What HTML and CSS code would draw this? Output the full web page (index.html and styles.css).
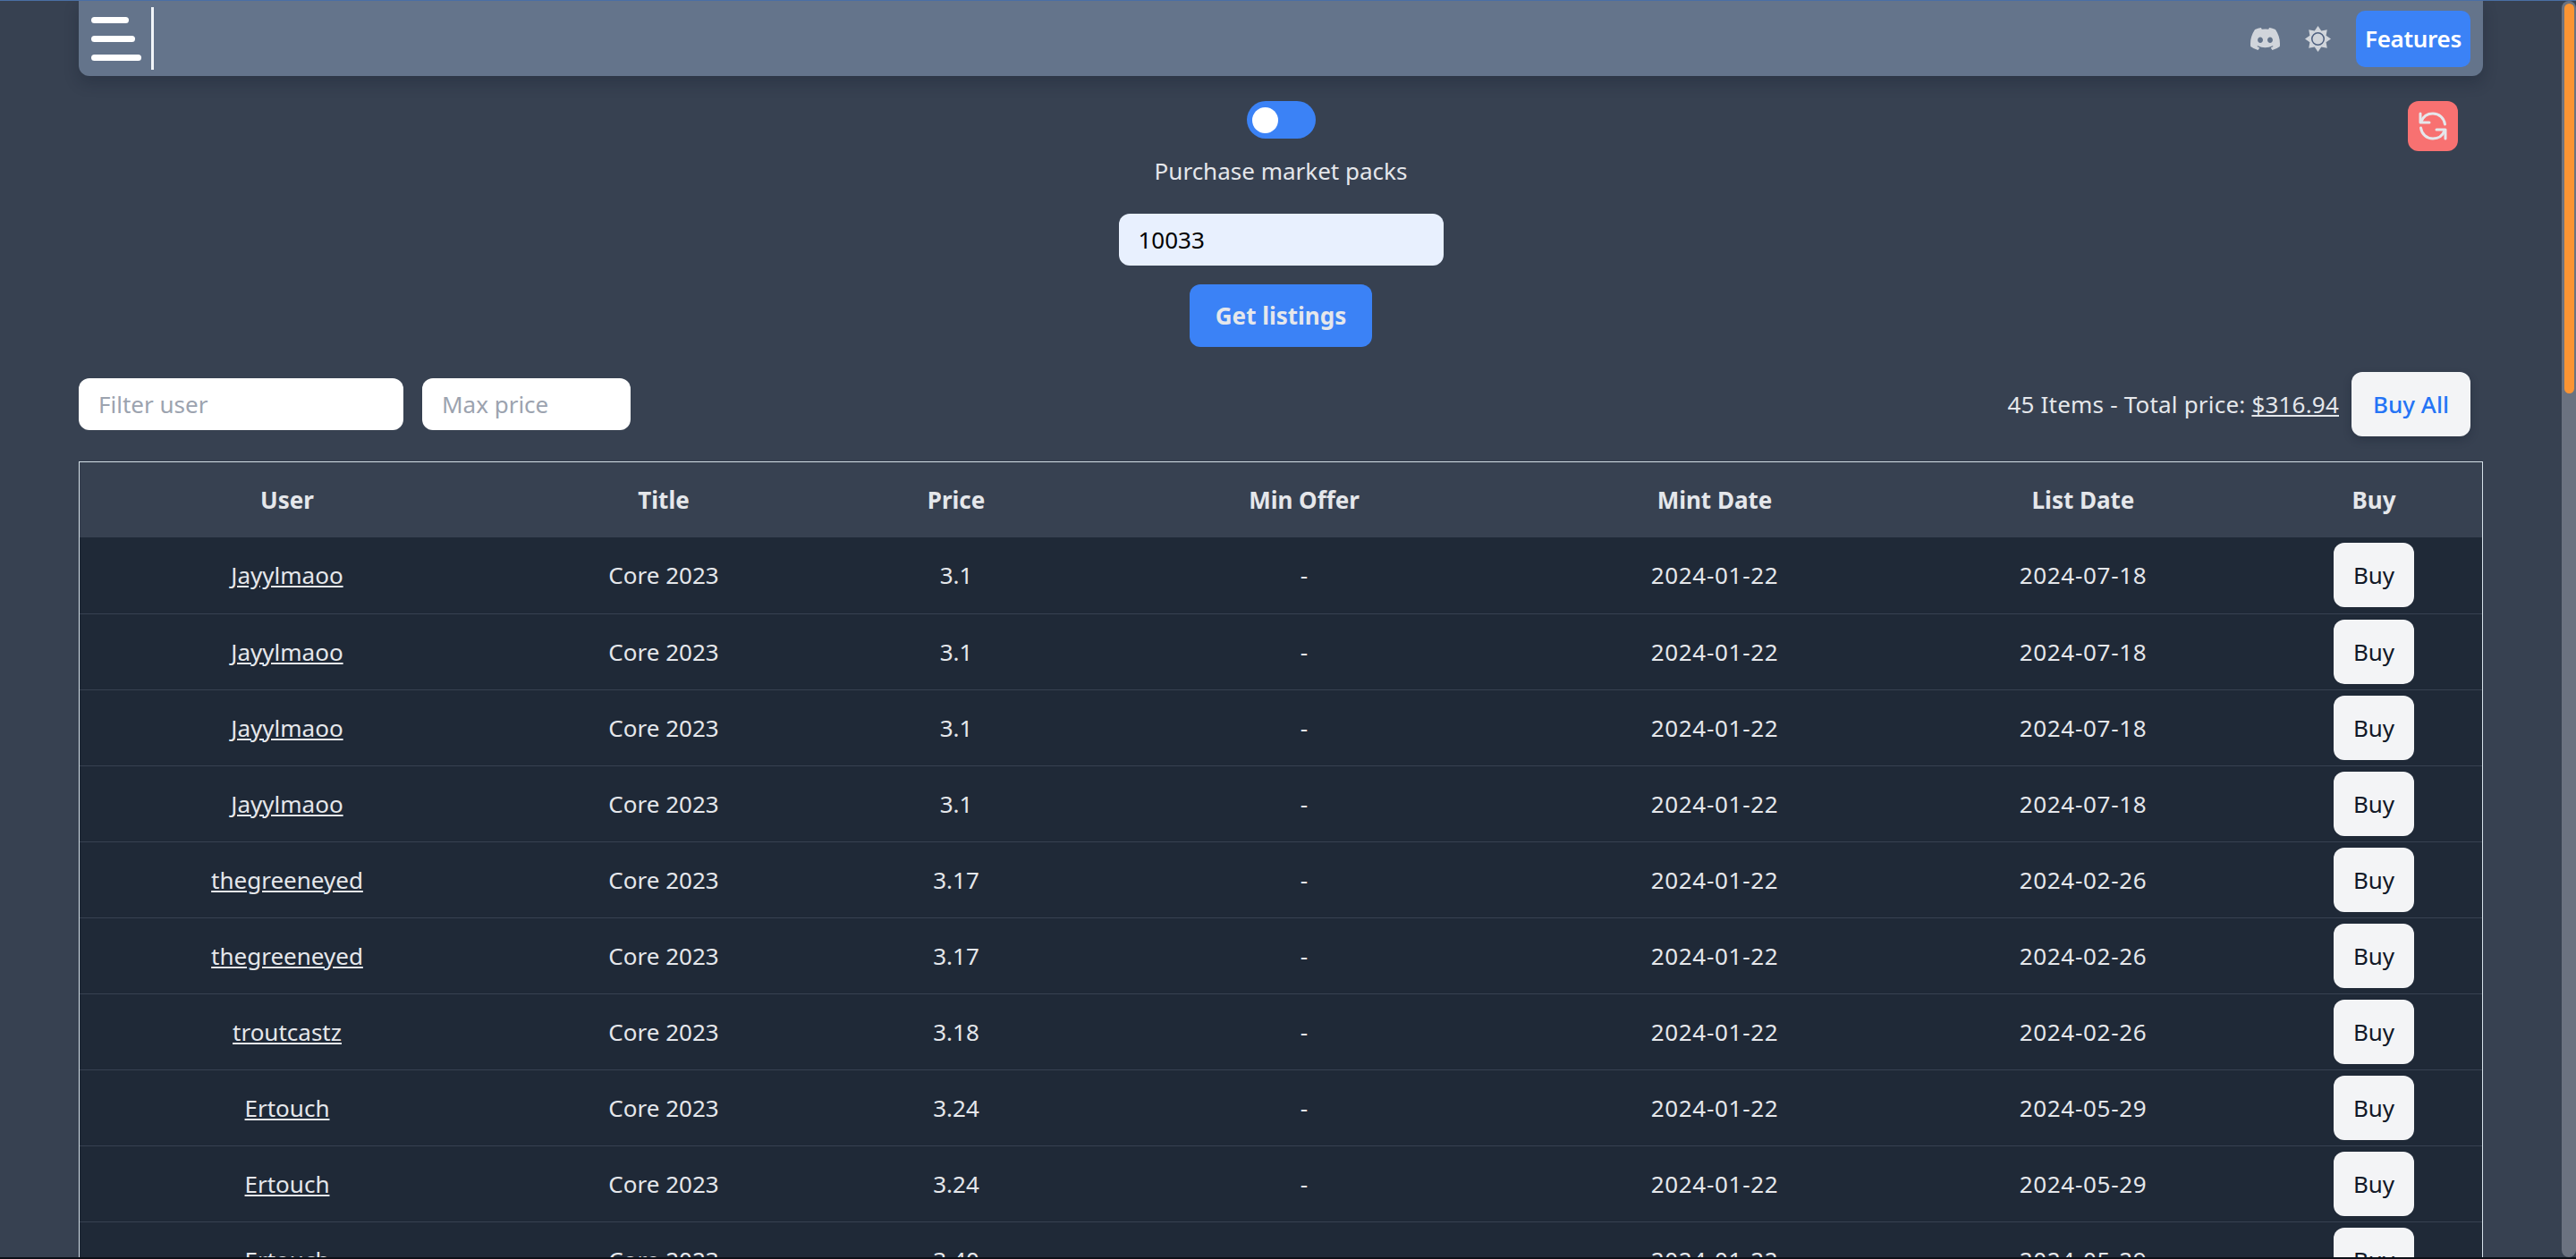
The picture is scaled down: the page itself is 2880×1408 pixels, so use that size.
FILE: index.html
```html
<!DOCTYPE html>
<html lang="en">
<head>
    <meta charset="UTF-8">
    <title>Market listings</title>
    <link rel="stylesheet" href="styles.css">
</head>
<body>

<div class="page">
    <nav class="navbar">
        <div class="nav-left">
            <button class="burger" aria-label="Menu">
                <span class="burger-line short"></span>
                <span class="burger-line mid"></span>
                <span class="burger-line long"></span>
            </button>
            <span class="nav-divider"></span>
        </div>
        <div class="nav-right">
            <svg class="icon-discord" viewBox="0 0 16 16" fill="currentColor"><path d="M13.545 2.907a13.227 13.227 0 0 0-3.257-1.011.05.05 0 0 0-.052.025c-.141.25-.297.577-.406.833a12.19 12.19 0 0 0-3.658 0 8.258 8.258 0 0 0-.412-.833.051.051 0 0 0-.052-.025c-1.125.194-2.22.534-3.257 1.011a.041.041 0 0 0-.021.018C.356 6.024-.213 9.047.066 12.032c.001.014.01.028.021.037a13.276 13.276 0 0 0 3.995 2.02.05.05 0 0 0 .056-.019c.308-.42.582-.863.818-1.329a.05.05 0 0 0-.01-.059.051.051 0 0 0-.018-.011 8.875 8.875 0 0 1-1.248-.595.05.05 0 0 1-.02-.066.051.051 0 0 1 .015-.019c.084-.063.168-.129.248-.195a.05.05 0 0 1 .051-.007c2.619 1.196 5.454 1.196 8.041 0a.052.052 0 0 1 .053.007c.08.066.164.132.248.195a.051.051 0 0 1-.004.085 8.254 8.254 0 0 1-1.249.594.05.05 0 0 0-.03.03.052.052 0 0 0 .003.041c.24.465.515.909.817 1.329a.05.05 0 0 0 .056.019 13.235 13.235 0 0 0 4.001-2.02.049.049 0 0 0 .021-.037c.334-3.451-.559-6.449-2.366-9.106a.034.034 0 0 0-.02-.019Zm-8.198 7.307c-.789 0-1.438-.724-1.438-1.612 0-.889.637-1.613 1.438-1.613.807 0 1.45.73 1.438 1.613 0 .888-.637 1.612-1.438 1.612Zm5.316 0c-.788 0-1.438-.724-1.438-1.612 0-.889.637-1.613 1.438-1.613.807 0 1.451.73 1.438 1.613 0 .888-.631 1.612-1.438 1.612Z"/></svg>
            <svg class="icon-sun" viewBox="0 0 28 28">
                <polygon class="sun-rays" points="14,0 17.64,5.22 23.9,4.1 22.78,10.36 28,14 22.78,17.64 23.9,23.9 17.64,22.78 14,28 10.36,22.78 4.1,23.9 5.22,17.64 0,14 5.22,10.36 4.1,4.1 10.36,5.22"/>
                <circle class="sun-ring" cx="14" cy="14" r="6.500"/>
            </svg>
            <button class="btn-features">Features</button>
        </div>
    </nav>

    <section class="pack-form">
        <div class="pack-center">
            <label class="switch"><span class="switch-knob"></span></label>
            <p class="switch-label">Purchase market packs</p>
            <input class="pack-input" type="text" value="10033">
            <button class="btn-primary">Get listings</button>
        </div>
        <button class="btn-refresh" aria-label="Refresh">
            <svg viewBox="0 0 32 32" fill="none" stroke="currentColor" stroke-width="3" stroke-linecap="round" stroke-linejoin="round">
                <path d="M2 2v10h10"/>
                <path d="M3 11C5 5.500 10 2 16 2c7 0 12.500 5 13.500 12"/>
                <path d="M30 30V20H20"/>
                <path d="M29 21c-2 5.500-7 9-13 9-7 0-12.500-5-13.500-12"/>
            </svg>
        </button>
    </section>

    <section class="toolbar">
        <div class="filters">
            <input class="filter-input filter-user" type="text" placeholder="Filter user">
            <input class="filter-input filter-price" type="text" placeholder="Max price">
        </div>
        <div class="totals">
            <span class="totals-text">45 Items - Total price: <a href="#">$316.94</a></span>
            <button class="btn-buy-all">Buy All</button>
        </div>
    </section>

    <div class="table-wrap">
        <table class="listings">
            <colgroup>
                <col class="col-user">
                <col class="col-title">
                <col class="col-price">
                <col class="col-offer">
                <col class="col-mint">
                <col class="col-list">
                <col class="col-buy">
            </colgroup>
            <thead>
                <tr><th>User</th><th>Title</th><th>Price</th><th>Min Offer</th><th>Mint Date</th><th>List Date</th><th>Buy</th></tr>
            </thead>
            <tbody>
                <tr><td><a href="#">Jayylmaoo</a></td><td>Core 2023</td><td>3.1</td><td>-</td><td class="date">2024-01-22</td><td class="date">2024-07-18</td><td><button class="btn-buy">Buy</button></td></tr>
                <tr><td><a href="#">Jayylmaoo</a></td><td>Core 2023</td><td>3.1</td><td>-</td><td class="date">2024-01-22</td><td class="date">2024-07-18</td><td><button class="btn-buy">Buy</button></td></tr>
                <tr><td><a href="#">Jayylmaoo</a></td><td>Core 2023</td><td>3.1</td><td>-</td><td class="date">2024-01-22</td><td class="date">2024-07-18</td><td><button class="btn-buy">Buy</button></td></tr>
                <tr><td><a href="#">Jayylmaoo</a></td><td>Core 2023</td><td>3.1</td><td>-</td><td class="date">2024-01-22</td><td class="date">2024-07-18</td><td><button class="btn-buy">Buy</button></td></tr>
                <tr><td><a href="#">thegreeneyed</a></td><td>Core 2023</td><td>3.17</td><td>-</td><td class="date">2024-01-22</td><td class="date">2024-02-26</td><td><button class="btn-buy">Buy</button></td></tr>
                <tr><td><a href="#">thegreeneyed</a></td><td>Core 2023</td><td>3.17</td><td>-</td><td class="date">2024-01-22</td><td class="date">2024-02-26</td><td><button class="btn-buy">Buy</button></td></tr>
                <tr><td><a href="#">troutcastz</a></td><td>Core 2023</td><td>3.18</td><td>-</td><td class="date">2024-01-22</td><td class="date">2024-02-26</td><td><button class="btn-buy">Buy</button></td></tr>
                <tr><td><a href="#">Ertouch</a></td><td>Core 2023</td><td>3.24</td><td>-</td><td class="date">2024-01-22</td><td class="date">2024-05-29</td><td><button class="btn-buy">Buy</button></td></tr>
                <tr><td><a href="#">Ertouch</a></td><td>Core 2023</td><td>3.24</td><td>-</td><td class="date">2024-01-22</td><td class="date">2024-05-29</td><td><button class="btn-buy">Buy</button></td></tr>
                <tr><td><a href="#">Ertouch</a></td><td>Core 2023</td><td>3.40</td><td>-</td><td class="date">2024-01-22</td><td class="date">2024-05-29</td><td><button class="btn-buy">Buy</button></td></tr>
            </tbody>
        </table>
    </div>
</div>

<div class="scrollbar"><div class="scrollbar-thumb"></div></div>

</body>
</html>
```

FILE: styles.css
```css
html, body {
    height: 100%;
}
body {
    display: flex;
    box-sizing: border-box;
    height: 1408px;
    margin: 0;
    overflow: hidden;
    font-family: 'Noto Sans', 'Open Sans', sans-serif;
    font-size: 26px;
    color: #e5e7eb;
    background-color: #374151;
    border-top: 1px solid #4a6fa5;
    border-bottom: 2px solid #0b0f17;
}
button, input {
    font-family: inherit;
    font-size: 26px;
}
a {
    color: inherit;
}
.page {
    flex: 1;
    min-width: 0;
    padding: 0 88px;
    overflow: hidden;
}

/* navbar */
.navbar {
    display: flex;
    justify-content: space-between;
    align-items: center;
    height: 84px;
    background-color: #64748b;
    border-radius: 0 0 12px 12px;
    box-shadow: 0 8px 16px rgba(17, 24, 39, 0.25);
}
.nav-left {
    display: flex;
    align-items: center;
    padding-left: 14px;
}
.burger {
    display: flex;
    flex-direction: column;
    gap: 14px;
    width: 56px;
    padding: 0;
    background: none;
    border: none;
}
.burger-line {
    display: block;
    height: 7px;
    background-color: #fff;
    border-radius: 4px;
}
.burger-line.short { width: 42px; }
.burger-line.mid { width: 49px; }
.burger-line.long { width: 56px; }
.nav-divider {
    width: 3px;
    height: 70px;
    margin-left: 11px;
    background-color: #f1f5f9;
}
.nav-right {
    display: flex;
    align-items: center;
    padding-right: 14px;
}
.icon-discord {
    width: 33px;
    height: 33px;
    color: #d1d5db;
}
.icon-sun {
    width: 29px;
    height: 29px;
    margin-left: 28px;
}
.sun-rays {
    fill: #d1d5db;
}
.sun-ring {
    fill: #d1d5db;
    stroke: #4f6180;
    stroke-width: 1.500;
}
.btn-features {
    width: 128px;
    height: 63px;
    margin-left: 28px;
    padding: 0;
    font-weight: 600;
    letter-spacing: -0.3px;
    color: #fff;
    background-color: #3b82f6;
    border: none;
    border-radius: 10px;
}

/* pack form */
.pack-form {
    display: grid;
    grid-template-columns: 1fr auto 1fr;
    padding-top: 28px;
}
.pack-center {
    grid-column: 2;
    display: flex;
    flex-direction: column;
    align-items: center;
}
.switch {
    display: flex;
    align-items: center;
    box-sizing: border-box;
    width: 77px;
    height: 42px;
    padding-left: 6px;
    background-color: #3b82f6;
    border-radius: 21px;
}
.switch-knob {
    width: 29px;
    height: 29px;
    background-color: #fff;
    border-radius: 50%;
}
.switch-label {
    margin: 18px 0 0;
    line-height: 36px;
}
.pack-input {
    box-sizing: border-box;
    width: 363px;
    height: 58px;
    margin-top: 30px;
    padding: 0 22px;
    color: #000;
    background-color: #e8f0fe;
    border: none;
    border-radius: 12px;
}
.btn-primary {
    width: 204px;
    height: 70px;
    margin-top: 21px;
    padding: 0;
    font-weight: 700;
    color: #e5e7eb;
    background-color: #3b82f6;
    border: none;
    border-radius: 12px;
}
.btn-refresh {
    grid-column: 3;
    justify-self: end;
    width: 56px;
    height: 56px;
    margin-right: 28px;
    padding: 12px;
    color: #e5e7eb;
    background-color: #f87171;
    border: none;
    border-radius: 12px;
}
.btn-refresh svg {
    display: block;
}

/* filters and totals */
.toolbar {
    display: flex;
    justify-content: space-between;
    align-items: center;
    margin-top: 28px;
    padding-right: 14px;
}
.filters {
    display: flex;
    gap: 21px;
}
.filter-input {
    box-sizing: border-box;
    height: 58px;
    padding: 0 22px;
    color: #111827;
    background-color: #fff;
    border: none;
    border-radius: 12px;
}
.filter-input::placeholder {
    color: #9ca3af;
}
.filter-user { width: 363px; }
.filter-price { width: 233px; }
.totals {
    display: flex;
    align-items: center;
    gap: 14px;
}
.totals-text {
    letter-spacing: 0.2px;
}
.btn-buy-all {
    width: 133px;
    height: 72px;
    padding: 0;
    font-weight: 500;
    color: #2574f5;
    background-color: #f3f4f6;
    border: none;
    border-radius: 12px;
    box-shadow: 0 4px 10px rgba(17, 24, 39, 0.25);
}

/* table */
.table-wrap {
    margin-top: 28px;
    border: 1px solid #d5e0e8;
    border-bottom: none;
}
.listings {
    width: 100%;
    table-layout: fixed;
    border-collapse: collapse;
    text-align: center;
}
.col-user { width: 464px; }
.col-title { width: 378px; }
.col-price { width: 276px; }
.col-offer { width: 502px; }
.col-mint { width: 416px; }
.col-list { width: 408px; }
.listings thead tr {
    height: 84px;
    background-color: #374151;
}
.listings th {
    padding: 0;
    font-weight: 700;
}
.listings tbody tr {
    height: 85px;
    background-color: #1f2937;
    border-bottom: 1px solid #374151;
}
.listings td {
    padding: 0;
}
.listings .date {
    letter-spacing: 0.7px;
}
.btn-buy {
    display: block;
    width: 90px;
    height: 72px;
    margin: 0 auto;
    padding: 0;
    color: #111827;
    background-color: #f3f4f6;
    border: none;
    border-radius: 12px;
}

/* page scrollbar */
.scrollbar {
    flex: none;
    box-sizing: border-box;
    width: 16px;
    padding: 3px 2px 0 3px;
    background-color: #6b7280;
    border-radius: 8px;
}
.scrollbar-thumb {
    height: 436px;
    background-color: #fb9433;
    border-radius: 6px;
}
```
